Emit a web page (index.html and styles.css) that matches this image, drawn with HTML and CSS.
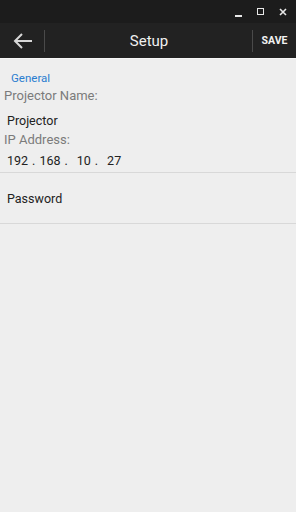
FILE: index.html
```html
<!DOCTYPE html>
<html>
<head>
<meta charset="utf-8">
<link rel="stylesheet" href="styles.css">
</head>
<body>
<div class="titlebar">
  <span class="wc wc-min"></span>
  <span class="wc wc-max"></span>
  <svg class="wc-close" width="8" height="8" viewBox="0 0 8 8"><path d="M1 1L7 7M7 1L1 7" stroke="#e8e8e8" stroke-width="1.6"/></svg>
</div>
<div class="toolbar">
  <div class="back">
    <svg width="20" height="16" viewBox="0 0 20 16"><path d="M19 8H2M9 1L2 8L9 15" fill="none" stroke="#d8d8d8" stroke-width="2"/></svg>
  </div>
  <div class="sep"></div>
  <div class="title">Setup</div>
  <div class="sep"></div>
  <div class="save">SAVE</div>
</div>
<div class="content">
  <div class="section">General</div>
  <div class="label">Projector Name:</div>
  <div class="value">Projector</div>
  <div class="label">IP Address:</div>
  <div class="ip"><span>192</span><span>.</span><span>168</span><span>.</span><span class="gap">10</span><span>.</span><span class="gap">27</span></div>
  <div class="row">Password</div>
</div>
</body>
</html>
```
FILE: styles.css
```css
html, body { margin: 0; padding: 0; }
body {
  width: 296px; height: 512px;
  background: #eeeeee;
  font-family: Roboto, "Noto Sans", sans-serif;
  overflow: hidden;
}
.titlebar {
  height: 23px;
  background: #1c1c1c;
  display: flex;
  align-items: center;
  justify-content: flex-end;
  padding-right: 9px;
}
.wc { display: block; }
.wc-min { width: 7px; height: 2px; background: #e8e8e8; margin-top: 9px; margin-right: 15px; }
.wc-max { width: 5px; height: 5px; border: 1.5px solid #e8e8e8; margin-right: 15px; }
.wc-close { display: block; }
.toolbar {
  height: 35px;
  background: #222222;
  display: flex;
  align-items: center;
  border-bottom: 1px solid #f6f6f6;
}
.back { width: 43px; display: flex; justify-content: center; padding-left: 1px; }
.back svg { display: block; }
.sep { width: 1px; height: 22px; background: #4a4a4a; }
.title { flex: 1; text-align: center; color: #f0f0f0; font-size: 15px; padding-left: 1px; }
.save { width: 43px; text-align: center; color: #f2f2f2; font-size: 10.5px; font-weight: bold; }
.content { padding-top: 12px; }
.section { color: #2a7dd0; font-size: 11.5px; padding-left: 11px; line-height: 14px; }
.label { color: #7b7b7b; font-size: 13px; padding-left: 4px; line-height: 16px; margin-top: 3px; }
.value { color: #222; font-size: 12.5px; padding-left: 7px; line-height: 16px; margin-top: 9px; }
.ip { color: #222; font-size: 12.5px; padding-left: 7px; line-height: 16px; margin-top: 5px; display: flex; gap: 4px; padding-bottom: 3px; border-bottom: 1px solid #d8d8d8; }
.ip .gap { margin-left: 5px; }
.row { color: #222; font-size: 12.5px; padding-left: 7px; padding-top: 1px; height: 49px; line-height: 49px; border-bottom: 1px solid #d8d8d8; }
```
